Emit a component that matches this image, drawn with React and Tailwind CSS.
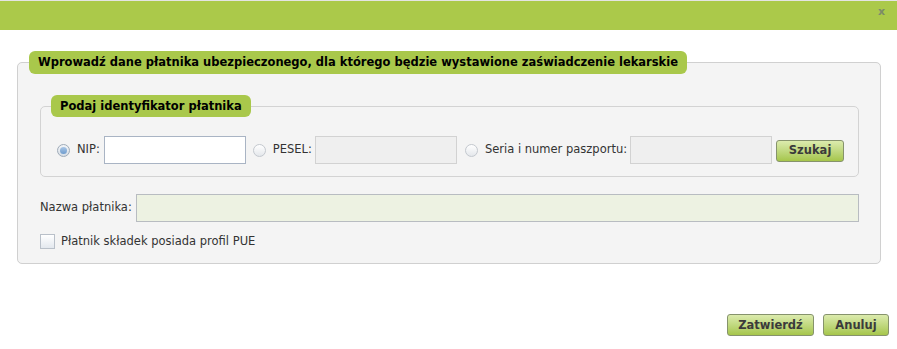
import React from "react";

function Radio({ checked }) {
  return (
    <span
      className={
        "w-[13px] h-[13px] rounded-full border shrink-0 flex items-center justify-center " +
        (checked
          ? "border-[#9fabb8] bg-gradient-to-b from-[#f2f5f8] to-[#d7dee6]"
          : "border-[#c3c8ce] bg-gradient-to-b from-[#ffffff] to-[#e4e7eb]")
      }
    >
      {checked && (
        <span className="w-[7px] h-[7px] rounded-full bg-gradient-to-b from-[#a9c6e6] to-[#6f9ccd]" />
      )}
    </span>
  );
}

function GreenButton({ children, className = "" }) {
  return (
    <button
      type="button"
      className={
        "h-[22px] shrink-0 rounded-[3px] border border-[#86936c] bg-gradient-to-b from-[#dcebad] to-[#a6c64a] font-bold text-[#3b3b3b] text-[11.5px] leading-none " +
        className
      }
    >
      {children}
    </button>
  );
}

export default function App() {
  return (
    <div className="w-[897px] h-[349px] bg-white flex flex-col font-['DejaVu_Sans','Liberation_Sans',sans-serif] text-[11.5px] text-[#333]">
      {/* top strip + title bar */}
      <div className="h-px bg-[#e4e4e4]" />
      <div className="h-[29px] bg-[#abc94a] flex justify-end items-start pt-[5px] pr-[12px]">
        <span className="font-bold text-[11px] leading-none text-[#7c8b69]">x</span>
      </div>

      {/* main fieldset */}
      <fieldset className="mt-[21px] ml-[17px] mr-[16px] border border-[#d0d0d0] rounded-[5px] bg-[#f4f4f4]">
        <legend className="ml-[11px] h-[23px] px-[9px] bg-[#a9c84b] rounded-[6px] font-bold text-black leading-[23px]">
          Wprowadź dane płatnika ubezpieczonego, dla którego będzie wystawione zaświadczenie lekarskie
        </legend>

        <div className="pl-[22px] pr-[21px] pb-[13px]">
          {/* identifier fieldset */}
          <fieldset className="mt-[21px] border border-[#d3d3d3] rounded-[5px] bg-[#f4f4f4]">
            <legend className="ml-[10px] h-[22px] px-[9px] bg-[#a9c84b] rounded-[6px] font-bold text-black leading-[22px]">
              Podaj identyfikator płatnika
            </legend>
            <div className="flex items-center whitespace-nowrap pl-[16px] pt-[19px] pb-[12px]">
              <Radio checked />
              <span className="ml-[7px]">NIP:</span>
              <input className="ml-[4px] w-[142px] h-[28px] shrink-0 border border-[#a9b4c4] bg-white outline-none" />
              <span className="ml-[7px]">
                <Radio />
              </span>
              <span className="ml-[7px]">PESEL:</span>
              <input disabled className="ml-[3px] w-[142px] h-[28px] shrink-0 border border-[#d2d2d2] bg-[#efefef]" />
              <span className="ml-[8px]">
                <Radio />
              </span>
              <span className="ml-[7px]">Seria i numer paszportu:</span>
              <input disabled className="ml-[3px] w-[142px] h-[28px] shrink-0 border border-[#d2d2d2] bg-[#efefef]" />
              <GreenButton className="ml-[4px] w-[68px] mt-[2px]">Szukaj</GreenButton>
            </div>
          </fieldset>

          <div className="mt-[17px] flex items-center">
            <span className="whitespace-nowrap">Nazwa płatnika:</span>
            <input disabled className="ml-[4px] flex-1 h-[28px] border border-[#b8bcc1] bg-[#edf2e2]" />
          </div>

          <div className="mt-[11px] flex items-center">
            <span className="w-[15px] h-[15px] border border-[#b9c0c9] bg-gradient-to-b from-[#ffffff] to-[#e3e8ee]" />
            <span className="ml-[6px]">Płatnik składek posiada profil PUE</span>
          </div>
        </div>
      </fieldset>

      {/* footer buttons */}
      <div className="mt-[50px] flex justify-end gap-[9px] pr-[8px]">
        <GreenButton className="w-[87px]">Zatwierdź</GreenButton>
        <GreenButton className="w-[66px]">Anuluj</GreenButton>
      </div>
    </div>
  );
}
